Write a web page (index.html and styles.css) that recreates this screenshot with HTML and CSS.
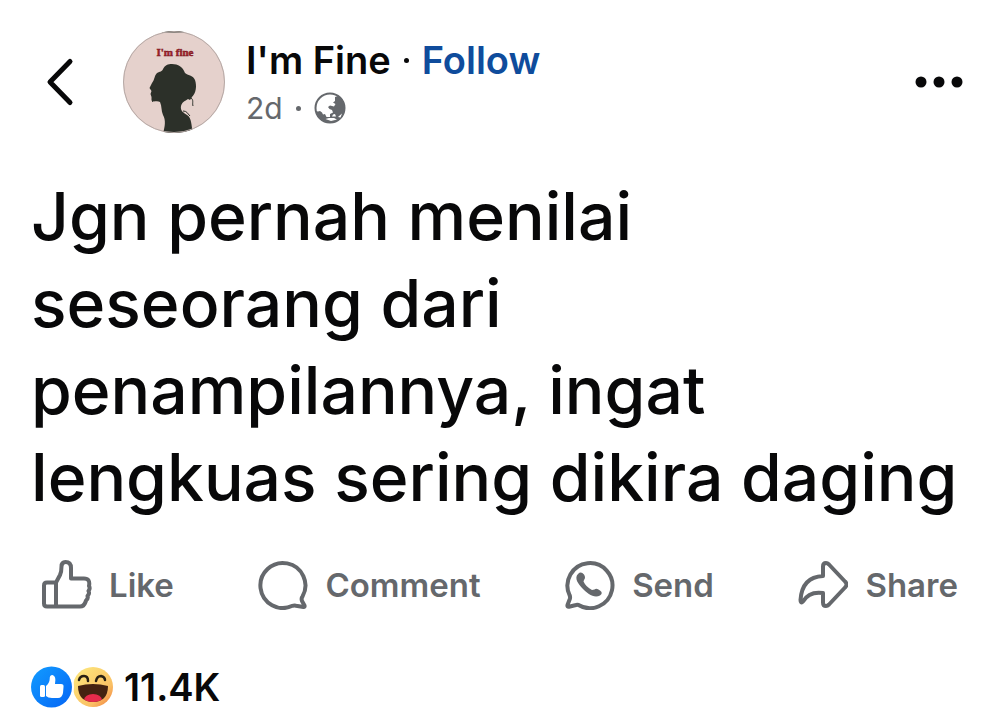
FILE: index.html
```html
<!DOCTYPE html>
<html lang="id">
<head>
<meta charset="utf-8">
<meta name="viewport" content="width=device-width, initial-scale=1">
<title>I'm Fine</title>
<link rel="stylesheet" href="styles.css">
</head>
<body>
<article class="post">
  <header class="post-header">
    <button class="icon-button back" type="button" aria-label="Back">
      <svg width="28" height="50" viewBox="0 0 28 50" fill="none" stroke="currentColor" stroke-width="5" stroke-linecap="round" stroke-linejoin="round"><path d="M24 4.500 4 25l20 20.500"/></svg>
    </button>
    <svg class="avatar" viewBox="0 0 102 102" role="img" aria-label="I'm Fine">
      <clipPath id="avatar-clip"><circle cx="51" cy="51" r="51"/></clipPath>
      <g clip-path="url(#avatar-clip)">
        <rect width="102" height="102" fill="#e5d1cc"/>
        <path d="M39 0h22v1.500H39z" fill="#333a33"/>
        <path d="M40 102C42 96 43 89 40 84C38 80 39 75 37 71C34 69 29 72 28.500 69L28.500 66L27.500 63L28.500 60L26.500 57L29 52C32 48 31 45 34 42C37 40 39 41 40 38C42 34 45 33 49 33C55 33 60 36 62 42C66 45 70 44 72 49C74 55 73 62 69 66L67 69L65 68C62 70 59 71 58 75C57 80 61 82 64 84C69 87 68 94 70 102Z" fill="#2c3029"/>
        <path d="M68 67C71 69 69 72 70 75M60 80C64 80 64 82 67 85" fill="none" stroke="#2c3029"/>
      </g>
      <circle cx="51" cy="51" r="50.500" fill="none" stroke="#b5a9a6"/>
      <text class="avatar-text" x="52" y="25" text-anchor="middle">I'm fine</text>
    </svg>
    <div class="byline">
      <div class="name-row"><h1 class="name">I'm Fine</h1><span class="dot dot-dark"></span><a class="follow" href="#">Follow</a></div>
      <div class="meta"><time>2d</time><span class="dot"></span>
        <svg width="32" height="32" viewBox="0 0 32 32" role="img" aria-label="Public"><circle cx="16" cy="16" r="14.500" fill="none" stroke="#65686c" stroke-width="2"/><path d="M21 5L24 4C29 7 31 12 31 16C31 24 25 31 16 31C9 31 3 26 1.500 19L4 19.500L6 19L8 20.500L9 22.500L11 22L12.500 25L16 25L16 22L19 20.500L18 18L15.500 17L14 15L16 13.500L20 14.500L21.500 12L19 10.500L21 9Z" fill="#65686c"/><path d="M11.500 27L15 26L20 26L23 27.500L17 29ZM18 24.500L19 22.500L21 22L22 24.500ZM24 25L28 21.500L26.500 25.500Z" fill="#fff"/></svg>
      </div>
    </div>
    <button class="icon-button more" type="button" aria-label="More options">
      <svg width="48" height="12" viewBox="0 0 48 12" fill="currentColor"><circle cx="6" cy="6" r="5.500"/><circle cx="24" cy="6" r="5.500"/><circle cx="42" cy="6" r="5.500"/></svg>
    </button>
  </header>

  <p class="post-text">Jgn pernah menilai seseorang dari penampilannya, ingat lengkuas sering dikira daging</p>

  <div class="actions">
    <button class="action" type="button">
      <svg class="action-icon" viewBox="0 0 50 50"><path d="M14 22.500H5Q2 22.500 2 25.500V43.500Q2 46.500 5 46.500H38Q42 46.500 43.500 42L44 40.500Q46.500 38.500 45.500 36Q48 33.500 46.500 31Q48.500 28.500 47 26Q48.500 18.500 42 18.500H29V8Q29 2 23.500 2Q19.500 2 19.500 6.500Q19.500 12 18 15ZM14 22.500V46.500"/></svg>
      <span>Like</span>
    </button>
    <button class="action" type="button">
      <svg class="action-icon" viewBox="0 0 50 50"><path d="M34.500 45.800A22.500 22.500 0 1 1 44.500 36.500Q43 38.500 44 41L46.500 45.500Q47 47 45.500 47L38 45.700Q36 45.200 34.500 45.800Z"/></svg>
      <span>Comment</span>
    </button>
    <button class="action" type="button">
      <svg class="action-icon" viewBox="0 0 50 50"><path d="M13.500 45A22.500 22.500 0 1 0 4.500 35Q5.500 37 4.800 39L2.500 45Q2 47 4 46.700L10 45.300Q12 44.500 13.500 45Z"/><path class="solid" d="M13 14Q16 11 19 14.500Q21 17.500 19 20L18.500 21.500Q21 27 27 30L29.500 29.500Q31.500 27.500 35 30.500Q38.500 33 35 35.500C29 39 22 33 18 29C13 24 9 18 13 14Z"/></svg>
      <span>Send</span>
    </button>
    <button class="action" type="button">
      <svg class="action-icon" viewBox="0 0 50 50"><path d="M25 16V6.500Q25 3 28 3Q29.500 3 31 4.500L47 21.500Q50 24.500 47 27.500L31 44.500Q29.500 46 28 46Q25 46 25 42.500V33Q11 31 5 41.500Q4 43 3 42Q2.500 41.500 2.500 40Q4 17 25 16Z"/></svg>
      <span>Share</span>
    </button>
  </div>

  <footer class="reactions">
    <svg width="82" height="42" viewBox="0 0 82 42" role="img" aria-label="Like and Haha">
      <defs>
        <linearGradient id="blue" x2="1" y2="1"><stop stop-color="#129cff"/><stop offset="1" stop-color="#0565f5"/></linearGradient>
        <linearGradient id="yellow" x2="1" y2="1"><stop offset=".2" stop-color="#fce078"/><stop offset=".7" stop-color="#fac064"/><stop offset="1" stop-color="#f0763a"/></linearGradient>
        <clipPath id="mouth"><path d="M47 20Q62 16 77 20C77 31 71 36 62 36C53 36 47 31 47 20Z"/></clipPath>
      </defs>
      <circle cx="62" cy="21" r="20" fill="url(#yellow)"/>
      <g fill="none" stroke="#282014" stroke-width="2.500" stroke-linecap="round"><path d="M48 14Q49 10 53 10Q57 10 57 15M65 15Q66 10 70 10Q74 11 74 14"/></g>
      <g clip-path="url(#mouth)"><path d="M45 16H79V37H45Z" fill="#442211"/><ellipse cx="62" cy="34" rx="9" ry="6" fill="#e52b4b"/></g>
      <circle cx="20.500" cy="21" r="22.500" fill="#fff"/>
      <circle cx="20.500" cy="21" r="20.500" fill="url(#blue)"/>
      <rect x="9" y="19" width="5" height="12" rx="1.500" fill="#fff"/>
      <path d="M15 20Q18.500 17 18.700 13Q18.500 9 21.500 9Q25.500 10 24 18H30Q33 18 32.500 21L32 27Q31 32 27 32H21Q17 32 15 30Z" fill="#fff"/>
    </svg>
    <span class="count">11.4K</span>
  </footer>
</article>
</body>
</html>
```
FILE: styles.css
```css
* {
  box-sizing: border-box;
}

body {
  margin: 0;
  background: #fff;
  color: #080809;
  font-family: Inter, "Liberation Sans", sans-serif;
}

button {
  padding: 0;
  border: 0;
  background: none;
  font: inherit;
  color: inherit;
  cursor: pointer;
}

svg {
  display: block;
  flex: none;
}

.post {
  padding: 31px 31px 15px;
}

.post-header {
  display: flex;
  align-items: center;
  padding: 0 6px 0 15px;
}

.avatar {
  width: 102px;
  height: 102px;
  margin: 0 21px 0 49px;
}

.avatar-text {
  fill: #a8232c;
  stroke: #7c1720;
  stroke-width: 0.5px;
  font: bold 11px "Liberation Serif", serif;
}

.byline {
  flex: 1;
  padding-top: 4px;
}

.name-row {
  display: flex;
  align-items: center;
  font-size: 38px;
  line-height: 48px;
  font-weight: 600;
}

.name {
  margin: 0;
  font: inherit;
}

.follow {
  color: #0f4c9c;
  text-decoration: none;
}

.dot {
  width: 5px;
  height: 5px;
  margin: 0 13px;
  border-radius: 50%;
  background: #65686c;
}

.dot-dark {
  background: #080809;
}

.meta {
  display: flex;
  align-items: center;
  font-size: 30px;
  line-height: 48px;
  color: #65686c;
}

.post-text {
  margin: 40px 0 39px;
  font-size: 66px;
  line-height: 87px;
  font-weight: 500;
}

.actions {
  display: flex;
  justify-content: space-between;
  padding: 0 11px;
  color: #65686c;
}

.action {
  display: flex;
  align-items: center;
  gap: 17px;
  font-size: 33px;
  font-weight: 600;
}

.action-icon {
  width: 50px;
  height: 50px;
  fill: none;
  stroke: currentColor;
  stroke-width: 4px;
  stroke-linejoin: round;
  stroke-linecap: round;
}

.solid {
  fill: currentColor;
  stroke: none;
}

.reactions {
  display: flex;
  align-items: center;
  gap: 11px;
  margin-top: 56px;
}

.count {
  font-size: 38px;
  line-height: 42px;
  font-weight: 600;
}
```
